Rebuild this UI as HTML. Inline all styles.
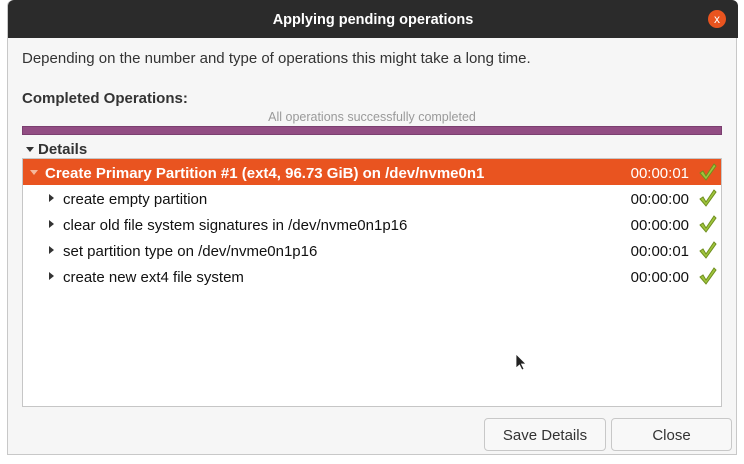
<!DOCTYPE html>
<html><head><style>
body{margin:0;width:744px;height:464px;background:#fff;font-family:"Liberation Sans",sans-serif;position:relative;overflow:hidden}
.win{position:absolute;left:7px;top:0;width:730px;height:455px;background:#f6f6f6;border:1px solid #c8c8c8;border-top:none;border-radius:6px 6px 0 0;box-sizing:border-box}
.tb{position:absolute;left:0;top:0;width:730px;height:38px;background:#2b2b2b;border-radius:6px 6px 0 0;color:#fff;font-weight:bold;font-size:14.5px;text-align:center;line-height:40px}
.x{position:absolute;right:12px;top:10px;width:18px;height:18px;border-radius:50%;background:#e9541f;color:#fff;font-size:12px;line-height:18px;font-weight:normal}
.t{position:absolute;font-size:15px;color:#333;white-space:nowrap}
.box{position:absolute;left:22px;top:158px;width:700px;height:249px;background:#fff;border:1px solid #c6c6c6;box-sizing:border-box}
.row{position:absolute;left:0;width:698px;height:26px;line-height:29px;font-size:15px;color:#111}
.row .n{position:absolute;left:40px}
.row .tm{position:absolute;right:32px}
.row .ar{position:absolute;left:26px;top:9px;width:0;height:0;border-left:5px solid #333;border-top:4px solid transparent;border-bottom:4px solid transparent}
.ck{position:absolute;right:4px;top:3px}
.btn{position:absolute;top:418px;height:33px;border:1px solid #c8c8c8;border-radius:4px;background:#f8f8f8;font-size:15px;color:#333;text-align:center;line-height:33px;box-sizing:border-box}
</style></head><body>
<div class="win">
<div class="tb">Applying pending operations<div class="x">x</div></div>
</div>
<div class="t" style="left:22px;top:50px">Depending on the number and type of operations this might take a long time.</div>
<div class="t" style="left:22px;top:90px;font-weight:bold">Completed Operations:</div>
<div class="t" style="left:0;width:744px;text-align:center;top:110px;font-size:12.5px;color:#9a9a9a">All operations successfully completed</div>
<div style="position:absolute;left:22px;top:126px;width:700px;height:9px;background:#924d83;border:1px solid #7b3f70;box-sizing:border-box"></div>
<div style="position:absolute;left:26px;top:147px;width:0;height:0;border-top:5px solid #333;border-left:4px solid transparent;border-right:4px solid transparent"></div>
<div class="t" style="left:38px;top:141px;font-weight:bold">Details</div>
<div class="box">
<div class="row" style="top:0;background:#e95420;color:#fff;font-weight:bold">
<div style="position:absolute;left:7px;top:11px;width:0;height:0;border-top:5px solid #f5b79c;border-left:4px solid transparent;border-right:4px solid transparent"></div>
<span class="n" style="left:22px">Create Primary Partition #1 (ext4, 96.73 GiB) on /dev/nvme0n1</span><span class="tm" style="font-weight:normal">00:00:01</span>
<svg class="ck" width="20" height="20" viewBox="0 0 20 20"><path d="M3 11l3-2 3 5 8-12 2 2-10 14z" fill="#9fc43c" stroke="#6f8f1e" stroke-width="1"/></svg></div>
<div class="row" style="top:26px"><div class="ar"></div><span class="n">create empty partition</span><span class="tm">00:00:00</span><svg class="ck" width="20" height="20" viewBox="0 0 20 20"><path d="M3 11l3-2 3 5 8-12 2 2-10 14z" fill="#9fc43c" stroke="#6f8f1e" stroke-width="1"/></svg></div>
<div class="row" style="top:52px"><div class="ar"></div><span class="n">clear old file system signatures in /dev/nvme0n1p16</span><span class="tm">00:00:00</span><svg class="ck" width="20" height="20" viewBox="0 0 20 20"><path d="M3 11l3-2 3 5 8-12 2 2-10 14z" fill="#9fc43c" stroke="#6f8f1e" stroke-width="1"/></svg></div>
<div class="row" style="top:78px"><div class="ar"></div><span class="n">set partition type on /dev/nvme0n1p16</span><span class="tm">00:00:01</span><svg class="ck" width="20" height="20" viewBox="0 0 20 20"><path d="M3 11l3-2 3 5 8-12 2 2-10 14z" fill="#9fc43c" stroke="#6f8f1e" stroke-width="1"/></svg></div>
<div class="row" style="top:104px"><div class="ar"></div><span class="n">create new ext4 file system</span><span class="tm">00:00:00</span><svg class="ck" width="20" height="20" viewBox="0 0 20 20"><path d="M3 11l3-2 3 5 8-12 2 2-10 14z" fill="#9fc43c" stroke="#6f8f1e" stroke-width="1"/></svg></div>
</div>
<svg style="position:absolute;left:515px;top:353px" width="12" height="18" viewBox="0 0 12 18"><path d="M1 1v14l3.5-3 2.5 5 2-1-2.5-5H11z" fill="#222" stroke="#fff" stroke-width="0.8"/></svg>
<div class="btn" style="left:484px;width:122px">Save Details</div>
<div class="btn" style="left:611px;width:121px">Close</div>
</body></html>
